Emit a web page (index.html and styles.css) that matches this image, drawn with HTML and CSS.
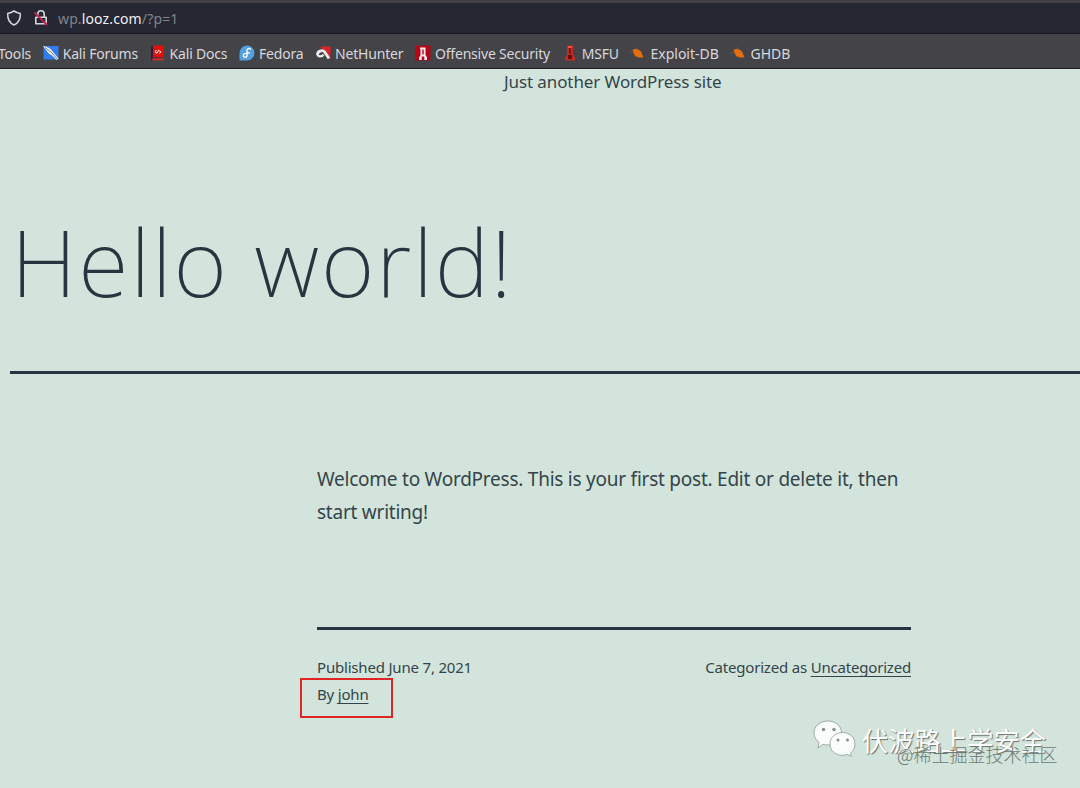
FILE: index.html
```html
<!DOCTYPE html>
<html lang="en">
<head>
    <meta charset="UTF-8">
    <title>Hello world!</title>
    <link rel="stylesheet" href="styles.css">
</head>
<body>
    <!-- Address bar -->
    <div class="urlbar">
        <svg class="shield" width="16" height="18" viewBox="0 0 16 18"><path d="M8 2 C10 3.3 12 4 14.3 4.5 C14.6 10 12.4 14 8 16 C3.6 14 1.4 10 1.7 4.5 C4 4 6 3.3 8 2Z" fill="none" stroke="#d6d7db" stroke-width="1.5" stroke-linejoin="round"/></svg>
        <svg class="lock" width="16" height="18" viewBox="0 0 16 18"><path d="M4.8 8 V5 a3.2 3.2 0 0 1 6.4 0 V8 M2.8 8.2 h10.4 v6.600 h-10.400z" fill="none" stroke="#d6d7db" stroke-width="1.6" stroke-linejoin="round"/><path d="M1.5 3.5 L14 16" stroke="#c42350" stroke-width="1.8"/></svg>
        <span class="url">wp.<b>looz.com</b>/?p=1</span>
    </div>

    <!-- Bookmarks toolbar -->
    <div class="bookmarks">
        <span class="bookmark tools">Tools</span>
        <span class="bookmark forums">
            <svg width="16" height="16" viewBox="0 0 16 16"><path d="M.5 1h15v13.500H.5z" fill="#2f7df0"/><path d="M0 1 C5 1.500 8 3.500 10 7 L15.500 13.500 L13.500 15 L8.500 10 C5 9 3.500 5 0 1z" fill="#f2f2f2"/><path d="M2 2.500 L9 8 L14 14" stroke="#444" stroke-width=".7" fill="none"/></svg>
            Kali Forums
        </span>
        <span class="bookmark docs">
            <svg width="16" height="16" viewBox="0 0 16 16"><path d="M1 2 L3 .5 V15.500 H1z" fill="#321b3c"/><path d="M3 .5h10.500v11.500H3z" fill="#e01208"/><path d="M3 12h10.500v3.500H2z" fill="#c53329"/><path d="M1.500 12.700h11.500" stroke="#58203a" stroke-width="1.200"/><path d="M6.500 5 L5 6.700 L7 8.300 L8.500 5.200 L10.800 6.800 L9.500 8.500" fill="none" stroke="#fff" stroke-width="1"/></svg>
            Kali Docs
        </span>
        <span class="bookmark fedora">
            <svg width="16" height="16" viewBox="0 0 16 16"><path d="M8 .5 a7.500 7.500 0 0 1 0 15 H.5 V8 A7.500 7.500 0 0 1 8 .5z" fill="#559fdf"/><path d="M11.500 4 C9.700 2.800 8 3.800 8 6 V10.300 C8 13 4.300 13 4.300 10.400 C4.300 8.400 6 7.900 10.500 7.900" fill="none" stroke="#fff" stroke-width="1.400" stroke-linecap="round"/></svg>
            Fedora
        </span>
        <span class="bookmark nethunter">
            <svg width="16" height="16" viewBox="0 0 16 16"><path d="M5 1.500 H15.500 V14z" fill="#d9242b"/><path d="M2.500 9 C3 5.500 8.500 4.500 10 7.500 L14 13.500" fill="none" stroke="#eee" stroke-width="2.800"/><path d="M2 8.500 C3 12.500 7 12 8.500 9.600" fill="none" stroke="#eee" stroke-width="2.200"/></svg>
            NetHunter
        </span>
        <span class="bookmark offsec">
            <svg width="16" height="16" viewBox="0 0 16 16"><path d="M.5 .5h15v15H.5z" fill="#b5061a"/><path d="M5 2.500h5.500v7.500l1.500 2.500v2.500H9.300v-3.500h-2.600v3.500H4v-2.500l1.500-2v-6.500h-.5z" fill="#f4eeee"/><path d="M7.300 4.500h1.400v5h-1.400z" fill="#b5061a"/></svg>
            Offensive Security
        </span>
        <span class="bookmark msfu">
            <svg width="16" height="16" viewBox="0 0 16 16"><path d="M5 .5h6v9l2 3v3H3v-3l2-3z" fill="#c52a25"/><path d="M6 1h4v2H6z" fill="#ed5148"/><path d="M8 3v6" stroke="#5b1212" stroke-width="1.500"/><path d="M6 10h4v4H6z" fill="#5e100f"/></svg>
            MSFU
        </span>
        <span class="bookmark exploit">
            <svg width="16" height="16" viewBox="0 0 16 16"><path d="M2.500 5 C5 3 9 4 11 6.500 L13.500 12.500 C9 13 5 12 4 9z" fill="#e66d0c"/><path d="M.5 7.500 L4 7 M6 2 L7 4 M5 12.500 L6.500 11" stroke="#8f532b" stroke-width=".8"/></svg>
            Exploit-DB
        </span>
        <span class="bookmark ghdb">
            <svg width="16" height="16" viewBox="0 0 16 16"><path d="M2.500 5 C5 3 9 4 11 6.500 L13.500 12.500 C9 13 5 12 4 9z" fill="#e66d0c"/><path d="M.5 7.500 L4 7 M6 2 L7 4 M5 12.500 L6.500 11" stroke="#8f532b" stroke-width=".8"/></svg>
            GHDB
        </span>
    </div>

    <!-- Blog post -->
    <div class="site">
        <p class="tagline">Just another WordPress site</p>
        <h1>Hello world!</h1>
        <div class="content">
            <p class="post">Welcome to WordPress. This is your first post. Edit or delete it, then<br>start writing!</p>
            <div class="meta">
                <div class="posted">
                    <div class="published">Published June 7, 2021</div>
                    <div class="byline">By <a>john</a></div>
                </div>
                <div class="category">Categorized as <a>Uncategorized</a></div>
            </div>
        </div>
    </div>

    <!-- Things that lie over the page -->
    <div class="highlight"></div>
    <div class="wechat">
        <svg width="44" height="38" viewBox="0 0 44 38">
            <g fill="#fbfdfc" stroke="#8d9994" stroke-width=".8">
                <path d="M15 1 C23 1 28.500 6 28.500 13 C28.500 20 23 25 15 25 C13 25 11.500 24.800 10 24.300 L5 28 L6 22.500 C3 20 1 17 1 13 C1 6 7 1 15 1z"/>
                <path d="M29.500 12.500 C37 12.500 42 17.500 42 24 C42 28 40 31 37.500 33 L38.500 36.500 L34.500 34.500 C33 35 31 35.300 29.500 35.300 C22 35.300 17 30.500 17 24 C17 17.500 22 12.500 29.500 12.500z"/>
            </g>
            <g fill="#84918b"><circle cx="10.500" cy="9.500" r="1.700"/><circle cx="21" cy="9.500" r="1.700"/><circle cx="25" cy="20" r="1.500"/><circle cx="34.500" cy="20" r="1.500"/></g>
        </svg>
        <span>伏波路上学安全</span>
    </div>
    <div class="watermark">@稀土掘金技术社区</div>
</body>
</html>
```
FILE: styles.css
```css
*{
    box-sizing: border-box;
}
body{
    margin: 0;
    height: 788px;
    overflow: hidden;
    position: relative;
    background-color: #d2e4db;
    font-family: "Noto Sans", "Noto Sans CJK SC", sans-serif;
    color: #34444a;
}
.urlbar{
    display: flex;
    align-items: center;
    height: 34px;
    padding-left: 6px;
    border-top: 3px solid #414147;
    border-bottom: 1px solid #15151b;
    background-color: #252733;
    font-size: 14px;
    letter-spacing: .13px;
    color: #82838b;
}
.lock{
    margin-left: 11px;
}
.url{
    margin-left: 9px;
}
.url b{
    font-weight: 400;
    color: #f0f0f4;
}
.bookmarks{
    display: flex;
    align-items: center;
    height: 35px;
    padding-top: 4px;
    border-bottom: 1px solid #202025;
    background-color: #434348;
    font-size: 14px;
    letter-spacing: -.2px;
    color: #d8d8dc;
    white-space: nowrap;
}
.bookmark{
    display: flex;
    align-items: center;
    gap: 4px;
    margin-right: 11.7px;
}
.bookmark svg{
    flex: none;
}
.tools{
    margin-left: -2px;
}
.exploit, .ghdb{
    letter-spacing: 0;
}
.tagline{
    margin: 0;
    padding-left: 504px;
    font-size: 17px;
    line-height: 25px;
    letter-spacing: -.1px;
}
h1{
    margin: 0 0 0 10px;
    height: 280px;
    padding: 105px 0 0 1px;
    border-bottom: 3px solid #28343f;
    font-size: 92px;
    font-weight: 200;
    line-height: 125px;
    letter-spacing: 1.7px;
    color: #28343f;
}
.content{
    width: 594px;
    margin-left: 317px;
}
.post{
    margin: 0;
    height: 253px;
    padding-top: 89px;
    font-size: 19px;
    line-height: 33px;
    letter-spacing: -.24px;
    white-space: nowrap;
}
.meta{
    display: flex;
    justify-content: space-between;
    padding-top: 24px;
    border-top: 3px solid #28343f;
    font-size: 15px;
    line-height: 26.5px;
    letter-spacing: -.19px;
}
.meta a{
    text-decoration: underline;
    text-decoration-thickness: 1px;
    text-underline-offset: 3px;
    text-decoration-skip-ink: none;
}
.highlight{
    position: absolute;
    left: 300px;
    top: 678px;
    width: 93px;
    height: 40px;
    border: 2px solid #e02625;
}
.wechat{
    position: absolute;
    left: 813px;
    top: 720px;
    display: flex;
    gap: 5px;
    font-family: "Noto Sans CJK SC", sans-serif;
    font-size: 26.3px;
    line-height: 40px;
    white-space: nowrap;
    color: #fff;
    text-shadow: 1px 1px 1px #65716c;
}
.watermark{
    position: absolute;
    left: 897px;
    top: 742px;
    font-family: "Noto Sans CJK SC", sans-serif;
    font-size: 18px;
    font-weight: 300;
    line-height: 24px;
    white-space: nowrap;
    color: #6d7b75;
}
```
